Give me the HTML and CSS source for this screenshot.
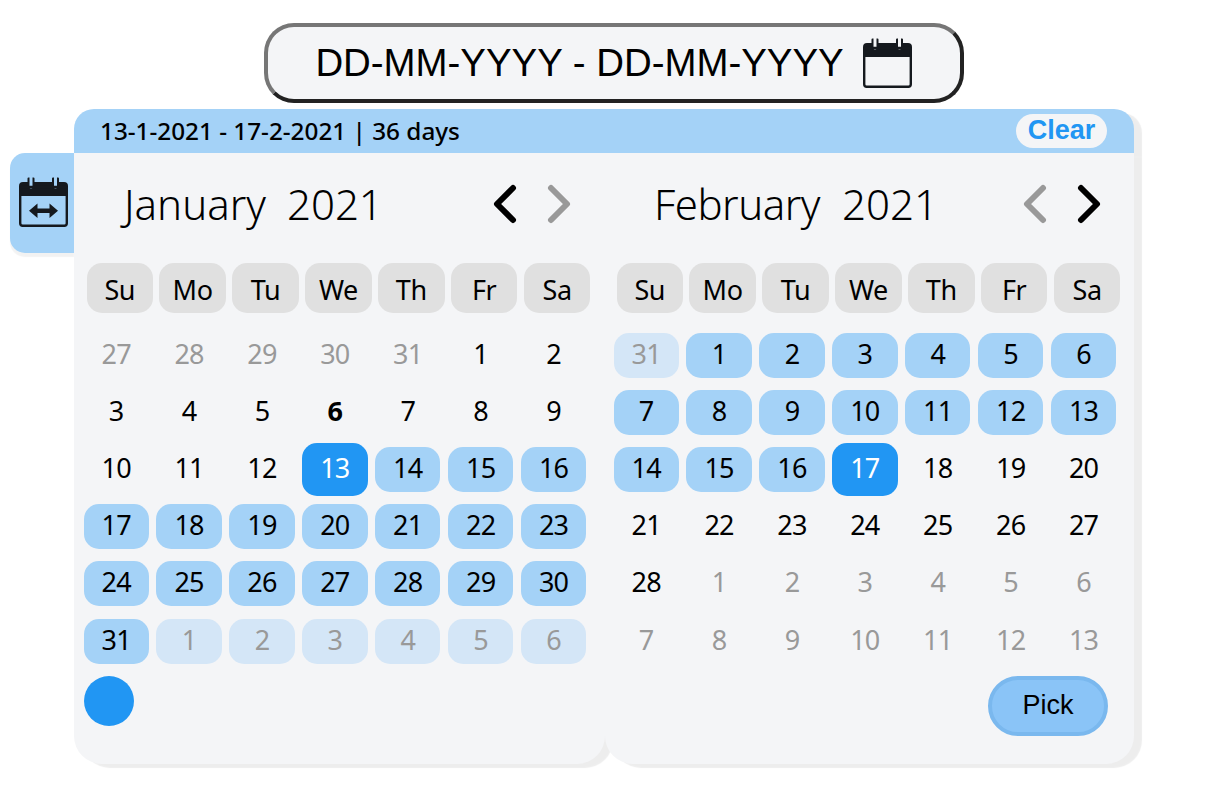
FILE: index.html
```html
<!DOCTYPE html>
<html lang="en">
<head>
<meta charset="utf-8">
<title>Date range picker</title>
<link rel="stylesheet" href="styles.css">
</head>
<body>
<div class="field">
  <span class="field-text">DD-MM-YYYY - DD-MM-YYYY</span>
  <svg class="cal-icon" viewBox="0 0 49 50"><path class="ic-fill" d="M0 19V9a4 4 0 0 1 4-4h4.500V1.500a1 1 0 0 1 1-1h1V10a1.500 1.500 0 0 0 3 0V.5h1a1 1 0 0 1 1 1V5H33V1.500a1 1 0 0 1 1-1h1V10a1.500 1.500 0 0 0 3 0V.5h1a1 1 0 0 1 1 1V5h5a4 4 0 0 1 4 4v10z"/><rect class="ic-line" x="1.200" y="10" width="46.600" height="38.800" rx="2.500"/></svg>
</div>
<div class="picker">
  <div class="tab">
    <svg class="cal-icon" viewBox="0 0 49 50"><path class="ic-fill" d="M0 19V9a4 4 0 0 1 4-4h4.500V1.500a1 1 0 0 1 1-1h1V10a1.500 1.500 0 0 0 3 0V.5h1a1 1 0 0 1 1 1V5H33V1.500a1 1 0 0 1 1-1h1V10a1.500 1.500 0 0 0 3 0V.5h1a1 1 0 0 1 1 1V5h5a4 4 0 0 1 4 4v10z"/><rect class="ic-line" x="1.200" y="10" width="46.600" height="38.800" rx="2.500"/><path class="ic-fill" d="M10 33.700l8.500-7.200v5h12v-5l8.500 7.200-8.500 7.200v-5h-12v5z"/></svg>
  </div>
  <div class="calendar">
    <div class="summary">
      <span class="summary-text">13-1-2021 - 17-2-2021 | 36 days</span>
      <button class="clear">Clear</button>
    </div>
    <div class="months">
      <section class="month month-first">
        <header class="month-head">
          <h2 class="title"><span>January</span><span>2021</span></h2>
          <div class="nav">
            <svg class="chev" viewBox="0 0 24 40"><path d="M20 4L4 20l16 16"/></svg>
            <svg class="chev chev-off" viewBox="0 0 24 40"><path d="M4 4l16 16L4 36"/></svg>
          </div>
        </header>
        <div class="weekdays"><span>Su</span><span>Mo</span><span>Tu</span><span>We</span><span>Th</span><span>Fr</span><span>Sa</span></div>
        <div class="days">
          <span class="muted">27</span><span class="muted">28</span><span class="muted">29</span><span class="muted">30</span><span class="muted">31</span><span>1</span><span>2</span>
          <span>3</span><span>4</span><span>5</span><span class="today">6</span><span>7</span><span>8</span><span>9</span>
          <span>10</span><span>11</span><span>12</span><span class="edge">13</span><span class="range">14</span><span class="range">15</span><span class="range">16</span>
          <span class="range">17</span><span class="range">18</span><span class="range">19</span><span class="range">20</span><span class="range">21</span><span class="range">22</span><span class="range">23</span>
          <span class="range">24</span><span class="range">25</span><span class="range">26</span><span class="range">27</span><span class="range">28</span><span class="range">29</span><span class="range">30</span>
          <span class="range">31</span><span class="ghost">1</span><span class="ghost">2</span><span class="ghost">3</span><span class="ghost">4</span><span class="ghost">5</span><span class="ghost">6</span>
        </div>
        <div class="foot"><span class="dot"></span></div>
      </section>
      <section class="month month-second">
        <header class="month-head">
          <h2 class="title"><span class="title-month">February</span><span>2021</span></h2>
          <div class="nav">
            <svg class="chev chev-off" viewBox="0 0 24 40"><path d="M20 4L4 20l16 16"/></svg>
            <svg class="chev" viewBox="0 0 24 40"><path d="M4 4l16 16L4 36"/></svg>
          </div>
        </header>
        <div class="weekdays"><span>Su</span><span>Mo</span><span>Tu</span><span>We</span><span>Th</span><span>Fr</span><span>Sa</span></div>
        <div class="days">
          <span class="ghost">31</span><span class="range">1</span><span class="range">2</span><span class="range">3</span><span class="range">4</span><span class="range">5</span><span class="range">6</span>
          <span class="range">7</span><span class="range">8</span><span class="range">9</span><span class="range">10</span><span class="range">11</span><span class="range">12</span><span class="range">13</span>
          <span class="range">14</span><span class="range">15</span><span class="range">16</span><span class="edge">17</span><span>18</span><span>19</span><span>20</span>
          <span>21</span><span>22</span><span>23</span><span>24</span><span>25</span><span>26</span><span>27</span>
          <span>28</span><span class="muted">1</span><span class="muted">2</span><span class="muted">3</span><span class="muted">4</span><span class="muted">5</span><span class="muted">6</span>
          <span class="muted">7</span><span class="muted">8</span><span class="muted">9</span><span class="muted">10</span><span class="muted">11</span><span class="muted">12</span><span class="muted">13</span>
        </div>
        <div class="foot foot-end"><button class="pick">Pick</button></div>
      </section>
    </div>
  </div>
</div>
</body>
</html>
```

FILE: styles.css
```css
* { box-sizing: border-box; }
html, body { margin: 0; height: 100%; background: #fff; }
body {
  padding-top: 23px;
  font-family: "Noto Sans", "Liberation Sans", sans-serif;
  color: #000;
  overflow: hidden;
}
.field {
  width: 700px;
  height: 80px;
  margin-left: 264px;
  padding-right: 1px;
  display: flex;
  align-items: center;
  justify-content: center;
  gap: 19px;
  background: #f4f5f7;
  border: 4px solid;
  border-color: #767676 #222 #222 #767676;
  border-radius: 30px;
}
.field-text {
  font-family: "Liberation Sans", Arial, sans-serif;
  font-size: 38.400px;
  line-height: 1;
}
.cal-icon { width: 49px; height: 50px; flex: none; }
.ic-fill { fill: #15191e; }
.ic-line { fill: none; stroke: #15191e; stroke-width: 2.400; }
.picker {
  display: flex;
  margin-top: 6px;
  margin-left: 10px;
}
.tab {
  width: 64px;
  height: 100px;
  margin-top: 44px;
  padding: 24px 0 0 9px;
  background: #a4d2f7;
  border-radius: 15px 0 0 15px;
  box-shadow: 0 4px 1px rgba(0, 0, 0, .05);
}
.calendar { width: 1060px; }
.summary {
  height: 44px;
  display: flex;
  align-items: center;
  justify-content: space-between;
  padding: 0 27px 0 26px;
  background: #a4d2f7;
  border-radius: 20px 20px 0 0;
  box-shadow: 8px 4px 1px rgba(0, 0, 0, .07);
}
.summary-text {
  font-size: 24.300px;
  font-weight: 500;
  line-height: 1;
  padding-top: 1px;
}
.clear {
  width: 91px;
  height: 34px;
  padding: 0 0 2px;
  border: 0;
  border-radius: 17px;
  background: #f4f5f7;
  color: #2196f3;
  font-family: "Liberation Sans", Arial, sans-serif;
  font-size: 27px;
  font-weight: 700;
  line-height: 1;
}
.months { display: flex; height: 611px; }
.month {
  display: flex;
  flex-direction: column;
  background: #f4f5f7;
  border-radius: 0 0 28px 28px;
  box-shadow: 8px 4px 1px rgba(0, 0, 0, .07);
}
.month-first { width: 531px; padding: 0 19px 0 10px; }
.month-second { width: 529px; padding: 0 18px 0 9px; }
.month-head {
  height: 110px;
  padding: 0 15.500px 10px 40px;
  display: flex;
  align-items: center;
  justify-content: space-between;
}
.month-second .month-head { padding-left: 40px; }
.title {
  display: flex;
  gap: 21px;
  margin: 0;
  padding-top: 2px;
  font-size: 42px;
  font-weight: 300;
  line-height: 1;
}
.month-second .title { gap: 22px; }
.title-month { letter-spacing: -.5px; }
.nav { display: flex; gap: 30px; padding-top: 2px; }
.chev { width: 24px; height: 40px; flex: none; }
.chev path {
  fill: none;
  stroke: #000;
  stroke-width: 6;
  stroke-linecap: round;
  stroke-linejoin: round;
}
.chev-off path { stroke: #999; }
.weekdays {
  display: grid;
  grid-template-columns: repeat(7, 66.400px);
  gap: 6.500px;
  margin: 0 -4.350px 0 2.550px;
}
.weekdays span {
  height: 50px;
  padding-top: 2px;
  display: flex;
  align-items: center;
  justify-content: center;
  background: #e0e0e0;
  border-radius: 15px;
  font-size: 27px;
  letter-spacing: -.4px;
}
.days {
  display: grid;
  grid-template-columns: repeat(7, 65.400px);
  grid-auto-rows: 45px;
  column-gap: 7.500px;
  row-gap: 12.120px;
  margin: 20px -.3px 0 -.5px;
}
.days span {
  padding-bottom: 4px;
  display: flex;
  align-items: center;
  justify-content: center;
  border-radius: 15px;
  font-size: 27px;
  letter-spacing: -.8px;
}
.days .muted { color: #999; }
.days .today { font-weight: 700; }
.days .range { background: #a4d2f7; }
.days .ghost { background: #d4e6f7; color: #999; }
.days .edge {
  background: #2196f3;
  color: #fff;
  margin: -4px 0;
}
.foot { margin-top: 12.400px; }
.foot-end { display: flex; justify-content: flex-end; padding-right: 8px; }
.dot {
  display: block;
  width: 50px;
  height: 50px;
  border-radius: 50%;
  background: #2196f3;
}
.pick {
  width: 120px;
  height: 60px;
  padding: 0;
  background: #8ac4f7;
  border: 4px solid #7ab8ee;
  border-radius: 30px;
  color: #000;
  font-family: "Liberation Sans", Arial, sans-serif;
  font-size: 27px;
  line-height: 1;
}
```
